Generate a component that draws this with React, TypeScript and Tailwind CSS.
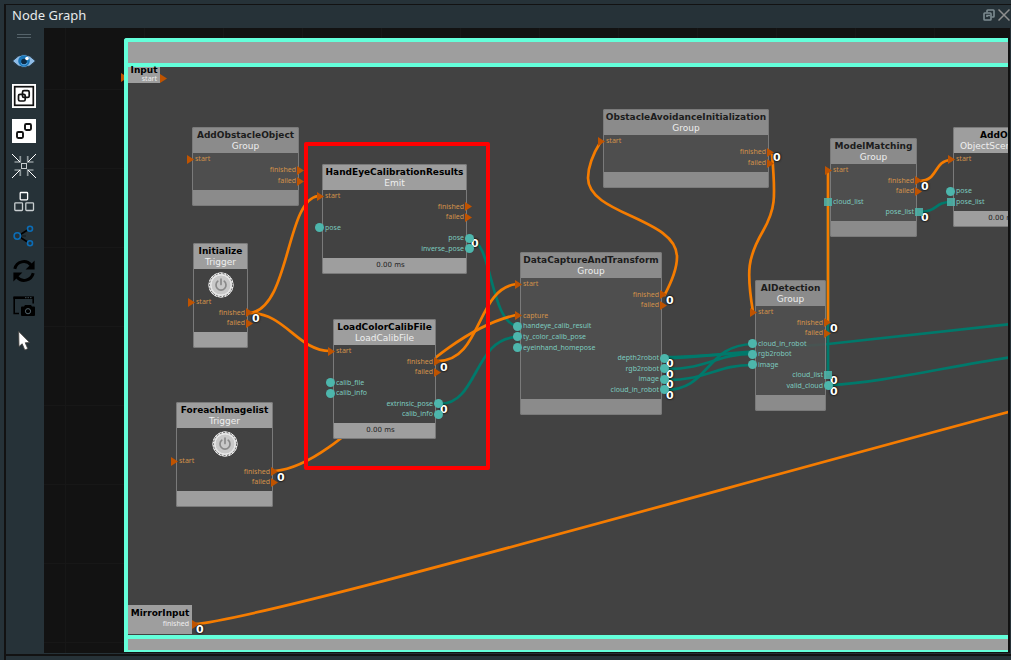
import React from "react";

type PortKind = "flow" | "data" | "list";

interface Port {
  label: string;
  side: "in" | "out";
  kind: PortKind;
  count?: number;
}

interface GraphNode {
  id: string;
  title: string;
  type: string;
  x: number;
  y: number;
  w: number;
  h: number;
  group?: boolean;
  trigger?: boolean;
  time?: string;
  ports: Port[];
}

interface Edge {
  kind: "flow" | "data";
  d: string;
}

// Scene coordinate shown in the top left corner of the canvas
const VIEW = { x: 44, y: 28 };

const start: Port = { label: "start", side: "in", kind: "flow" };
const finished: Port = { label: "finished", side: "out", kind: "flow" };
const finishedUsed: Port = { ...finished, count: 0 };
const failed: Port = { label: "failed", side: "out", kind: "flow" };

const nodes: GraphNode[] = [
  {
    id: "add-obstacle",
    title: "AddObstacleObject",
    type: "Group",
    x: 192, y: 127, w: 106, h: 78,
    group: true,
    ports: [start, finished, failed],
  },
  {
    id: "hand-eye",
    title: "HandEyeCalibrationResults",
    type: "Emit",
    x: 322, y: 164, w: 144, h: 109,
    time: "0.00 ms",
    ports: [
      start,
      finished,
      failed,
      { label: "pose", side: "in", kind: "data" },
      { label: "pose", side: "out", kind: "data", count: 0 },
      { label: "inverse_pose", side: "out", kind: "data" },
    ],
  },
  {
    id: "initialize",
    title: "Initialize",
    type: "Trigger",
    x: 193, y: 243, w: 54, h: 104,
    trigger: true,
    ports: [start, finishedUsed, failed],
  },
  {
    id: "load-calib",
    title: "LoadColorCalibFile",
    type: "LoadCalibFile",
    x: 333, y: 319, w: 102, h: 119,
    time: "0.00 ms",
    ports: [
      start,
      finishedUsed,
      failed,
      { label: "calib_file", side: "in", kind: "data" },
      { label: "calib_info", side: "in", kind: "data" },
      { label: "extrinsic_pose", side: "out", kind: "data", count: 0 },
      { label: "calib_info", side: "out", kind: "data" },
    ],
  },
  {
    id: "foreach",
    title: "ForeachImagelist",
    type: "Trigger",
    x: 176, y: 402, w: 96, h: 104,
    trigger: true,
    ports: [start, finishedUsed, failed],
  },
  {
    id: "data-capture",
    title: "DataCaptureAndTransform",
    type: "Group",
    x: 520, y: 252, w: 141, h: 162,
    group: true,
    ports: [
      start,
      finishedUsed,
      failed,
      { label: "capture", side: "in", kind: "flow" },
      { label: "handeye_calib_result", side: "in", kind: "data" },
      { label: "ty_color_calib_pose", side: "in", kind: "data" },
      { label: "eyeinhand_homepose", side: "in", kind: "data" },
      { label: "depth2robot", side: "out", kind: "data", count: 0 },
      { label: "rgb2robot", side: "out", kind: "data", count: 0 },
      { label: "image", side: "out", kind: "data", count: 0 },
      { label: "cloud_in_robot", side: "out", kind: "data", count: 0 },
    ],
  },
  {
    id: "avoidance",
    title: "ObstacleAvoidanceInitialization",
    type: "Group",
    x: 603, y: 109, w: 165, h: 78,
    group: true,
    ports: [start, finishedUsed, failed],
  },
  {
    id: "ai-detection",
    title: "AIDetection",
    type: "Group",
    x: 755, y: 280, w: 70, h: 130,
    group: true,
    ports: [
      start,
      finishedUsed,
      failed,
      { label: "cloud_in_robot", side: "in", kind: "data" },
      { label: "rgb2robot", side: "in", kind: "data" },
      { label: "image", side: "in", kind: "data" },
      { label: "cloud_list", side: "out", kind: "list", count: 0 },
      { label: "valid_cloud", side: "out", kind: "data", count: 0 },
    ],
  },
  {
    id: "model-matching",
    title: "ModelMatching",
    type: "Group",
    x: 830, y: 138, w: 86, h: 98,
    group: true,
    ports: [
      start,
      finishedUsed,
      failed,
      { label: "cloud_list", side: "in", kind: "list" },
      { label: "pose_list", side: "out", kind: "list", count: 0 },
    ],
  },
  {
    id: "add-object",
    title: "AddObject",
    type: "ObjectSceneUpdater",
    x: 953, y: 127, w: 106, h: 99,
    time: "0.00 ms",
    ports: [
      start,
      finished,
      failed,
      { label: "pose", side: "in", kind: "data" },
      { label: "pose_list", side: "in", kind: "list" },
    ],
  },
];

const edges: Edge[] = [
  { kind: "data", d: "M828 375V202" },
  { kind: "data", d: "M665 357C720 357 770 348 828 344L1012 324" },
  { kind: "data", d: "M665 358C700 358 720 353 753 353" },
  { kind: "data", d: "M665 369C710 369 715 354 753 354" },
  { kind: "data", d: "M665 380C710 380 715 365 753 365" },
  { kind: "data", d: "M665 390C710 390 705 345 753 344" },
  { kind: "data", d: "M830 385C880 383 950 366 1012 357" },
  { kind: "data", d: "M470 239C492 240 490 322 517 326" },
  { kind: "data", d: "M440 404C478 404 474 338 517 337" },
  { kind: "data", d: "M919 212C938 212 934 202 951 202" },
  { kind: "flow", d: "M250 313C290 308 286 200 318 196" },
  { kind: "flow", d: "M250 313C285 313 298 351 330 351" },
  { kind: "flow", d: "M275 471C345 465 425 335 516 315" },
  { kind: "flow", d: "M438 361C482 361 476 288 517 284" },
  { kind: "flow", d: "M664 296Q677 272 677 257C677 218 588 215 588 178Q588 162 601 141" },
  { kind: "flow", d: "M772 154C776 200 775 210 763 231C748 257 746 270 753 312" },
  { kind: "flow", d: "M828 322V170" },
  { kind: "flow", d: "M920 181C938 181 934 160 951 160" },
  { kind: "flow", d: "M194 624C260 620 700 494 1012 411" },
];

const Arrow = () => (
  <svg className="h-[9px] w-[7px]" viewBox="0 0 7 9">
    <path d="M0 0L7 4.5L0 9Z" fill="#bf5300" />
  </svg>
);

const Connector: React.FC<{ kind: PortKind }> = ({ kind }) => {
  if (kind === "flow") return <Arrow />;
  if (kind === "list") return <span className="block size-2 bg-[#4db6ac]/85" />;
  return <span className="block size-[9px] rounded-full bg-[#4db6ac]" />;
};

const Count: React.FC<{ value: number }> = ({ value }) => (
  <span className="absolute left-full top-[6px] ml-1 text-[11px] font-bold leading-[10px] text-white [text-shadow:0_0_2px_#000,0_0_2px_#000]">
    {value}
  </span>
);

const PortRow: React.FC<{ port: Port }> = ({ port }) => {
  const input = port.side === "in";
  return (
    <div className={`relative flex h-[10px] items-center px-[3px] ${input ? "" : "justify-end"}`}>
      <span
        className={`font-['Noto_Sans',sans-serif] text-[7px] leading-[10px] ${
          port.kind === "flow" ? "text-[#d2924a]" : "text-[#7ccabf]"
        }`}
      >
        {port.label}
      </span>
      {port.count !== undefined && <Count value={port.count} />}
      <span
        className={`absolute inset-y-0 flex items-center ${
          input ? "right-full -mr-[2px]" : "left-full -ml-[2px]"
        }`}
      >
        <Connector kind={port.kind} />
      </span>
    </div>
  );
};

const PowerIcon = () => (
  <svg className="size-[26px]" viewBox="0 0 26 26" fill="none">
    <circle cx="13" cy="13" r="12.2" fill="#dedede" stroke="#fff" />
    <circle cx="13" cy="13" r="11.6" stroke="#222" strokeWidth="0.7" strokeDasharray="2 1.5" />
    <circle cx="13" cy="13" r="10" fill="#c9c9c9" stroke="#e9e9e9" />
    <path d="M9.8 9.2a5 5 0 1 0 6.4 0M13 7v5.5" stroke="#8a8a8a" strokeWidth="1.7" strokeLinecap="round" />
  </svg>
);

const NodeCard: React.FC<{ node: GraphNode }> = ({ node }) => {
  const bar = node.group ? "bg-[#8b8b8b]" : "bg-[#9e9e9e]";
  return (
    <div
      className={`absolute flex flex-col rounded-[2px] outline -outline-offset-1 outline-[#7a7a7a] ${
        node.group ? "bg-[#505050]/90" : "bg-[#424242]"
      }`}
      style={{ left: node.x - VIEW.x, top: node.y - VIEW.y, width: node.w + 1, height: node.h + 1 }}
    >
      <div className={`h-[26px] whitespace-nowrap rounded-t-[2px] pt-[3px] ${bar}`}>
        <div className="flex justify-center">
          <h2 className={`text-[9px] font-bold leading-[11px] ${node.group ? "text-[#1c1c1c]" : "text-black"}`}>
            {node.title}
          </h2>
        </div>
        <div className="flex justify-center">
          <p className="text-[9px] leading-[11px] text-[#eee]">{node.type}</p>
        </div>
      </div>
      {node.trigger && (
        <div className="-mb-[2px] flex h-[29px] items-end justify-center">
          <button type="button" aria-label={`Run ${node.title}`} className="rounded-full">
            <PowerIcon />
          </button>
        </div>
      )}
      <div className="flex flex-1 flex-col justify-between pb-1 pt-px">
        {node.ports.map((port, i) => (
          <PortRow key={i} port={port} />
        ))}
      </div>
      <div className={`h-4 rounded-b-[2px] pr-2 text-center text-[7px] leading-[14px] text-[#222] ${bar}`}>
        {node.time}
      </div>
    </div>
  );
};

const tools = [
  {
    label: "Toggle visibility",
    icon: (
      <>
        <path d="M0.5 12Q12 -1 23.5 12Q12 25 0.5 12Z" fill="#8fbce6" stroke="#16242c" strokeWidth="0.8" />
        <circle cx="12" cy="12" r="5.8" fill="#1976b8" />
        <circle cx="12" cy="12.5" r="2.8" fill="#0c2b45" />
        <path d="M9 14.5Q12 17.5 15.5 14" stroke="#6fb1e6" strokeWidth="0.9" fill="none" />
        <circle cx="15" cy="9.5" r="1.8" fill="#fff" />
      </>
    ),
  },
  {
    label: "Group nodes",
    icon: (
      <>
        <rect width="24" height="24" fill="#fff" />
        <g stroke="#111" strokeWidth="1.7" fill="none">
          <rect x="2.7" y="2.7" width="18.6" height="18.6" />
          <rect x="6.5" y="10.3" width="6.7" height="6.7" rx="1.5" />
          <rect x="10.5" y="6.7" width="6.7" height="6.7" rx="1.5" />
        </g>
      </>
    ),
  },
  {
    label: "Ungroup nodes",
    icon: (
      <>
        <rect width="24" height="24" fill="#fff" />
        <g stroke="#111" strokeWidth="1.9" fill="none">
          <rect x="13" y="5" width="6" height="6" rx="1.2" />
          <rect x="5" y="13" width="6" height="6" rx="1.2" />
        </g>
      </>
    ),
  },
  {
    label: "Fit to view",
    icon: (
      <>
        <path
          d="M2.5 8H8.3V2M15.7 2V8H21.5M2.5 16H8.3V22M15.7 22V16H21.5"
          stroke="#8e989b"
          strokeWidth="1.7"
          fill="none"
        />
        <path d="M0 0L8 8M24 0L16 8M0 24L8 16M24 24L16 16" stroke="#fff" strokeWidth="1" />
        <rect x="9.5" y="9.5" width="5" height="5" stroke="#c5cbcd" fill="none" />
      </>
    ),
  },
  {
    label: "Arrange nodes",
    icon: (
      <g fill="none" strokeWidth="1.3">
        <rect x="8.2" y="3.5" width="7.4" height="7.4" rx="0.8" stroke="#fff" />
        <rect x="2.8" y="13.8" width="7.7" height="7.7" rx="0.8" stroke="#c9cfd1" />
        <rect x="13.8" y="13.8" width="7.7" height="7.7" rx="0.8" stroke="#c9cfd1" />
      </g>
    ),
  },
  {
    label: "Show connections",
    icon: (
      <g fill="none" strokeWidth="1.6">
        <path d="M8.5 10.5L15.5 6M8.5 13.5L15.5 18" stroke="#000" />
        <path d="M9.5 12H14" stroke="#000" strokeWidth="1" strokeDasharray="1 1" />
        <circle cx="5.3" cy="12" r="3.2" stroke="#0b6db7" />
        <circle cx="18" cy="4.7" r="2.5" stroke="#0b6db7" />
        <circle cx="18" cy="19.3" r="2.5" stroke="#0b6db7" />
      </g>
    ),
  },
  {
    label: "Refresh",
    icon: (
      <>
        <path
          d="M2.8 9.8A9.3 9.3 0 0 1 19 6M21.2 14.2A9.3 9.3 0 0 1 5 18"
          stroke="#000"
          strokeWidth="3"
          fill="none"
        />
        <path d="M22.6 1.5V10.5H13.6ZM1.4 22.5V13.5H10.4Z" fill="#000" />
      </>
    ),
  },
  {
    label: "Screenshot",
    icon: (
      <>
        <path d="M7 19.5H2.2V3.5H21.2V9.5" stroke="#000" strokeWidth="1.6" fill="none" />
        <path d="M1.5 2.5H22V5H1.5Z" fill="#000" />
        <path d="M13 3.7H20" stroke="#52636b" strokeWidth="0.8" strokeDasharray="1.5 1" />
        <path
          d="M9 13.5Q9 12.5 10 12.5H12L13 11H19L20 12.5H22Q23 12.5 23 13.5V21Q23 22 22 22H10Q9 22 9 21Z"
          fill="#000"
        />
        <circle cx="16" cy="17.2" r="2.6" fill="none" stroke="#52636b" />
      </>
    ),
  },
  {
    label: "Select",
    icon: (
      <path
        d="M6.7 2.5L7 17.5L10.2 14.8L12.8 21L15.8 19.7L13.2 13.8L17.6 13.5Z"
        fill="#fff"
        stroke="#46423f"
        strokeWidth="0.8"
      />
    ),
  },
];

const Toolbar = () => (
  <nav aria-label="Graph tools" className="flex w-[38px] shrink-0 flex-col items-center pr-[2px]">
    <div className="flex h-[15px] flex-col justify-center gap-[2px]">
      <span className="h-px w-[14px] bg-[#56646b]" />
      <span className="h-px w-[14px] bg-[#56646b]" />
    </div>
    {tools.map((tool) => (
      <button key={tool.label} type="button" aria-label={tool.label} className="flex h-[35px] items-center">
        <svg className="size-6" viewBox="0 0 24 24">
          {tool.icon}
        </svg>
      </button>
    ))}
  </nav>
);

const Canvas = () => (
  <main className="relative flex-1 overflow-hidden bg-[#121212] font-['DejaVu_Sans',sans-serif]">
    <svg className="absolute inset-0 size-full">
      <defs>
        <pattern id="grid" x="21" y="61" width="79" height="79" patternUnits="userSpaceOnUse">
          <path d="M0.5 0V79M0 0.5H79" stroke="#171717" />
        </pattern>
      </defs>
      <rect width="100%" height="100%" fill="url(#grid)" />
    </svg>

    <div className="absolute left-[77px] top-[45px]">
      <Arrow />
    </div>

    {/* open group that holds the nodes */}
    <div className="absolute bottom-px left-20 right-0 top-[10px] flex flex-col rounded-tl-[3px] border-4 border-b-2 border-r-0 border-[#64ffda] bg-[#424242]">
      <div className="h-[21px] bg-[#9e9e9e]" />
      <div className="flex-1 border-y-4 border-[#64ffda]" />
      <div className="h-[11px] bg-[#9e9e9e]" />
    </div>

    <svg className="absolute inset-0 size-full" fill="none">
      <g transform={`translate(${-VIEW.x} ${-VIEW.y})`} strokeWidth="2.7">
        {edges.map((edge) => (
          <path key={edge.d} d={edge.d} stroke={edge.kind === "flow" ? "#f57c00" : "#00796b"} />
        ))}
      </g>
    </svg>

    {/* group input pins */}
    <div className="absolute left-[84px] top-[39px] flex w-[32px] flex-col bg-[#9e9e9e]">
      <h2 className="h-[7px] text-center text-[9px] font-bold leading-[7px] text-black">Input</h2>
      <div className="relative flex h-[9px] items-center justify-end pr-[3px] font-['Noto_Sans',sans-serif] text-[7px] leading-[9px] text-[#eee]">
        start
        <span className="absolute left-full">
          <Arrow />
        </span>
      </div>
    </div>
    <div className="absolute left-[84px] top-[577px] h-[29px] w-[64px] bg-[#9e9e9e] pt-[3px]">
      <h2 className="text-center text-[9px] font-bold leading-[11px] text-black">MirrorInput</h2>
      <div className="relative flex h-[10px] items-center justify-end pr-[3px] text-[#eee]">
        <span className="font-['Noto_Sans',sans-serif] text-[7px] leading-[10px]">finished</span>
        <Count value={0} />
        <span className="absolute left-full">
          <Arrow />
        </span>
      </div>
    </div>

    {nodes.map((node) => (
      <NodeCard key={node.id} node={node} />
    ))}

    {/* highlighted calibration nodes */}
    <div className="absolute left-[260px] top-[114px] h-[328px] w-[186px] rounded-[2px] border-4 border-[#ff0000]" />
  </main>
);

const App: React.FC = () => {
  return (
    <div className="flex min-h-screen flex-col bg-[#263238] pl-1 pt-1">
      <section className="flex flex-1 flex-col border-l-2 border-t border-[#121212]">
        <header className="flex h-[23px] items-center justify-between pb-1 pl-[6px] pr-px">
          <h1 className="font-['Noto_Sans',sans-serif] text-[13px] leading-4 text-[#e6eaeb]">Node Graph</h1>
          <div className="flex items-center gap-[3px]">
            <button type="button" aria-label="Float panel">
              <svg className="size-3" viewBox="0 0 12 12" fill="none" stroke="#7d8c91" strokeWidth="1.6">
                <path d="M4 3.5V1.7Q4 1 4.7 1H10.3Q11 1 11 1.7V7.3Q11 8 10.3 8H8.5" />
                <rect x="1" y="4" width="7" height="7" rx="0.7" />
                <path d="M4 8V6.5H7" />
              </svg>
            </button>
            <button type="button" aria-label="Close panel">
              <svg className="size-3" viewBox="0 0 12 12" fill="none" stroke="#8e8e8e" strokeWidth="1.5">
                <path d="M0.5 0.5L11.5 11.5M11.5 0.5L0.5 11.5" />
              </svg>
            </button>
          </div>
        </header>
        <div className="mr-px flex flex-1 border-r-2 border-[#121212]">
          <Toolbar />
          <Canvas />
        </div>
        <div className="mt-px h-[2px] bg-[#121212]" />
        <div className="h-1" />
      </section>
    </div>
  );
};

export default App;
